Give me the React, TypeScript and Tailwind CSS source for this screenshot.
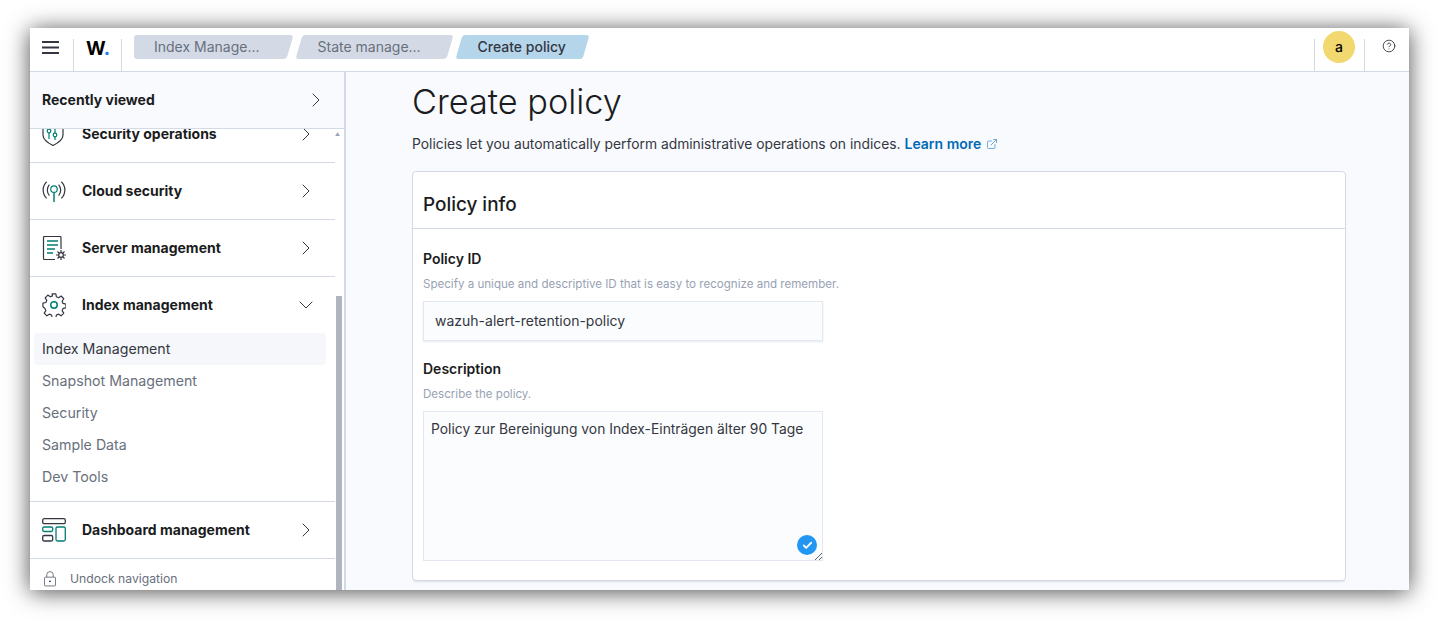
import { ChevronDown, ChevronRight, ExternalLink, CircleHelp, Check } from "lucide-react";

const MenuIcon = () => (
  <svg width="17" height="13" viewBox="0 0 17 13" fill="none" stroke="#343741" strokeWidth="2">
    <path d="M0 1h17M0 6.500h17M0 12h17" />
  </svg>
);

const ShieldIcon = () => (
  <svg width="22" height="24" viewBox="0 0 22 24" fill="none" strokeWidth="1.2">
    <path d="M1 2v11c0 5 5 8 10 10.500C16 21 21 18 21 13V2" stroke="#343741" />
    <path d="M7 3v4M7 11v6M13 6v5M13 15v3" stroke="#017d73" />
    <circle cx="7" cy="9" r="1.800" stroke="#017d73" />
    <circle cx="13" cy="13" r="1.800" stroke="#017d73" />
  </svg>
);

const CloudIcon = () => (
  <svg width="24" height="24" viewBox="0 0 26 26" fill="none" strokeWidth="1.3">
    <path d="M5 3C0 8 0 16 5 21M8 6c-3 3.500-3 8.500 0 12M21 3c5 5 5 13 0 18M18 6c3 3.500 3 8.500 0 12" stroke="#343741" />
    <circle cx="13" cy="11" r="3.500" stroke="#017d73" />
    <path d="M13 14.500V25" stroke="#017d73" strokeWidth="1.6" />
  </svg>
);

const ServerIcon = () => (
  <svg width="25" height="25" viewBox="0 0 25 25" fill="none" strokeWidth="1.2">
    <path d="M13 23.500H2.500a1 1 0 0 1-1-1V1.500a1 1 0 0 1 1-1H18a1 1 0 0 1 1 1V13" stroke="#343741" />
    <path d="M5 5h11M5 9h11M5 13h8M5 17h6" stroke="#017d73" strokeWidth="1.4" />
    <circle cx="19" cy="19" r="2.300" stroke="#343741" />
    <path d="M19 14v2.500M19 21.500V24M14 19h2.500M21.500 19H24M15.500 15.500l1.800 1.800M20.700 20.700l1.800 1.800M22.500 15.500l-1.800 1.800M17.300 20.700l-1.800 1.800" stroke="#343741" />
  </svg>
);

const GearIcon = () => (
  <svg width="24" height="24" viewBox="0 0 26 26" fill="none">
    <path
      d="M11 1h4l.6 3.100 2.400 1 2.700-1.800 2.900 2.900-1.800 2.700 1 2.400 3.200.7v4l-3.200.7-1 2.400 1.800 2.700-2.900 2.900-2.700-1.800-2.400 1-.6 3.100h-4l-.6-3.100-2.400-1-2.700 1.800-2.900-2.900 1.800-2.700-1-2.400L1 15v-4l3.200-.7 1-2.400-1.800-2.700 2.900-2.900 2.700 1.800 2.400-1z"
      stroke="#343741"
      strokeWidth="1.300"
      strokeLinejoin="round"
    />
    <circle cx="13" cy="13" r="3.500" stroke="#017d73" strokeWidth="1.600" />
  </svg>
);

const DashboardIcon = () => (
  <svg width="24" height="24" viewBox="0 0 24 24" fill="none" strokeWidth="1.3">
    <rect x=".7" y=".7" width="22.600" height="5" rx="1.500" stroke="#343741" />
    <rect x=".7" y="9" width="10" height="4.500" rx="1.500" stroke="#017d73" />
    <rect x="14" y="9" width="9.300" height="14" rx="1.500" stroke="#017d73" />
    <rect x=".7" y="17.500" width="10" height="5.500" rx="1.500" stroke="#343741" />
  </svg>
);

const LockIcon = () => (
  <svg width="12" height="16" viewBox="0 0 13 16" fill="none" stroke="#69707d" strokeWidth="1">
    <rect x=".5" y="6" width="12" height="9.500" rx="1" />
    <path d="M3 6V3.500a3.500 3.500 0 0 1 7 0V6" />
    <circle cx="6.500" cy="10.500" r="1" fill="#343741" stroke="none" />
  </svg>
);

const NavRow = ({ icon, label, open = false }: { icon: React.ReactNode; label: string; open?: boolean }) => (
  <div className="flex h-[56px] w-full items-center pl-3 pr-[17px]">
    <div className="flex w-[40px] shrink-0 items-center">{icon}</div>
    <span className="flex-1 text-sm font-bold text-[#1a1c21]">{label}</span>
    {open ? (
      <ChevronDown size={24} strokeWidth={1} className="text-[#343741]" />
    ) : (
      <ChevronRight size={24} strokeWidth={1} className="text-[#343741]" />
    )}
  </div>
);

const Crumb = ({ label, active = false, width, first = false }: { label: string; active?: boolean; width: string; first?: boolean }) => (
  <div className={`relative flex h-6 items-center ${width} ${first ? "pl-4" : "pl-[19px]"}`}>
    <div className={`absolute inset-0 -skew-x-[16deg] rounded-[3px] ${active ? "bg-[#b5d5ea]" : "bg-[#d3dae6]"}`} />
    {first && <div className="absolute inset-y-0 -left-1 w-5 rounded-l-[3px] bg-[#d3dae6]" />}
    <span className={`relative text-sm ${active ? "font-medium text-[#343741]" : "text-[#69707d]"}`}>{label}</span>
  </div>
);

const subItems = ["Snapshot Management", "Security", "Sample Data", "Dev Tools"];

export default function App() {
  return (
    <div className="h-[622px] w-[1439px] overflow-hidden bg-white pl-[30px] pt-[28px] font-['Inter',sans-serif]">
      <div className="flex h-[562px] w-[1379px] flex-col overflow-hidden bg-white shadow-[0_2px_22px_rgba(0,0,0,0.7)]">
        <header className="flex h-[44px] shrink-0 items-end border-b border-[#d3dae6] bg-white">
          <div className="flex h-8 w-[44px] items-start border-r border-[#d3dae6] pl-3 pt-[2px]">
            <MenuIcon />
          </div>
          <div className="flex h-8 w-[48px] items-start justify-center border-r border-[#d3dae6]">
            <span className="-mt-[2px] ml-[1px] text-[19px] leading-6 font-bold text-black">
              W<span className="text-[#1a7cf0]">.</span>
            </span>
          </div>
          <div className="mb-[12px] ml-[16px] flex flex-1 items-center gap-[9px]">
            <Crumb label="Index Manage..." width="w-[151.5px]" first />
            <Crumb label="State manage..." width="w-[151px]" />
            <Crumb label="Create policy" width="w-[127px]" active />
          </div>
          <div className="flex h-8 w-[51px] items-start justify-center border-x border-[#d3dae6] pr-[1px]">
            <div className="-mt-[8px] flex size-8 items-center justify-center rounded-full bg-[#f1d86f] text-sm font-medium text-black">a</div>
          </div>
          <div className="flex h-8 w-[44px] items-start justify-center pl-[3px]">
            <CircleHelp size={14} strokeWidth={1.5} className="text-[#343741]" />
          </div>
        </header>

        <div className="flex min-h-0 flex-1">
          <aside className="flex w-[316px] shrink-0 flex-col border-r-2 border-[#d3dae6] bg-white">
            <div className="flex h-[57px] shrink-0 items-center border-b border-[#d3dae6] bg-[#f9fafd] pl-3 pr-4">
              <span className="flex-1 text-sm font-bold text-[#1a1c21]">Recently viewed</span>
              <ChevronRight size={24} strokeWidth={1} className="text-[#343741]" />
            </div>
            <div className="relative min-h-0 flex-1 overflow-hidden">
              <div className="-mt-[23px] w-[305px]">
                <div className="flex h-[57px] items-center border-b border-[#d3dae6]">
                  <NavRow icon={<ShieldIcon />} label="Security operations" />
                </div>
                <div className="border-b border-[#d3dae6]">
                  <NavRow icon={<CloudIcon />} label="Cloud security" />
                </div>
                <div className="border-b border-[#d3dae6]">
                  <NavRow icon={<ServerIcon />} label="Server management" />
                </div>
                <div className="h-[225px] border-b border-[#d3dae6]">
                  <NavRow icon={<GearIcon />} label="Index management" open />
                  <div className="mx-1 flex h-8 w-[292px] items-center rounded bg-[#f5f7fa] px-2 text-[14.2px] text-[#343741]">Index Management</div>
                  {subItems.map((item) => (
                    <div key={item} className="flex h-8 items-center pl-3 text-[14.2px] text-[#69707d]">
                      {item}
                    </div>
                  ))}
                </div>
                <div className="border-b border-[#d3dae6]">
                  <NavRow icon={<DashboardIcon />} label="Dashboard management" />
                </div>
                <div className="flex h-[40px] items-center pl-[14px] text-[12.2px] text-[#69707d]">
                  <LockIcon />
                  <span className="ml-[14px]">Undock navigation</span>
                </div>
              </div>
              <div className="absolute top-[3px] right-[4px] text-[5px] leading-none text-[#98a2b3]">▲</div>
              <div className="absolute right-[2px] bottom-0 h-[294px] w-[6px] bg-[#b0b4be]" />
            </div>
          </aside>

          <main className="min-w-0 flex-1 bg-[#f9fafd] pl-[66px]">
            <h1 className="mt-[9px] text-[34.3px] leading-[42px] font-light text-[#1a1c21]">Create policy</h1>
            <p className="mt-[9px] flex h-6 items-center text-[13.83px] text-[#343741]">
              Policies let you automatically perform administrative operations on indices.
              <span className="ml-1 text-sm font-semibold text-[#006bb4]">Learn more</span>
              <ExternalLink size={12} strokeWidth={1.5} className="ml-[5px] text-[#4a90c8]" />
            </p>

            <section className="mt-[15px] h-[410px] w-[934px] rounded border border-[#d3dae6] bg-white shadow-[0_2px_2px_-1px_rgba(152,162,179,0.3)]">
              <div className="flex h-[57px] items-center border-b border-[#d3dae6] px-[10px] pt-[11px]">
                <h2 className="text-[18.9px] font-medium text-[#1a1c21]">Policy info</h2>
              </div>
              <div className="px-[10px] pt-[20px]">
                <div className="text-sm leading-5 font-semibold text-[#1a1c21]">Policy ID</div>
                <div className="mt-[6px] text-[11.57px] leading-[18px] text-[#98a2b3]">Specify a unique and descriptive ID that is easy to recognize and remember.</div>
                <div className="mt-[8px] flex h-[40px] w-[400px] items-center border border-[#e3e7ef] bg-[#fbfcfd] pl-[11px] text-sm text-[#343741] shadow-[0_1px_2px_rgba(152,162,179,0.25)]">
                  wazuh-alert-retention-policy
                </div>
                <div className="mt-[18px] text-sm leading-5 font-semibold text-[#1a1c21]">Description</div>
                <div className="mt-[6px] text-[11.57px] leading-[18px] text-[#98a2b3]">Describe the policy.</div>
                <div className="relative mt-[8px] h-[150px] w-[400px] border border-[#e3e7ef] bg-[#fbfcfd] py-[7px] pl-[7px] text-[13.85px] leading-5 text-[#343741]">
                  Policy zur Bereinigung von Index-Einträgen älter 90 Tage
                  <div className="absolute right-[5px] bottom-[5px] flex size-[20px] items-center justify-center rounded-full bg-[#2196f3]">
                    <Check size={11} strokeWidth={4} className="text-white" />
                  </div>
                  <svg width="8" height="8" viewBox="0 0 8 8" className="absolute right-0 bottom-0" stroke="#343741" strokeWidth=".8">
                    <path d="M1 8l7-7M5 8l3-3" />
                  </svg>
                </div>
              </div>
            </section>
          </main>
        </div>
      </div>
    </div>
  );
}
